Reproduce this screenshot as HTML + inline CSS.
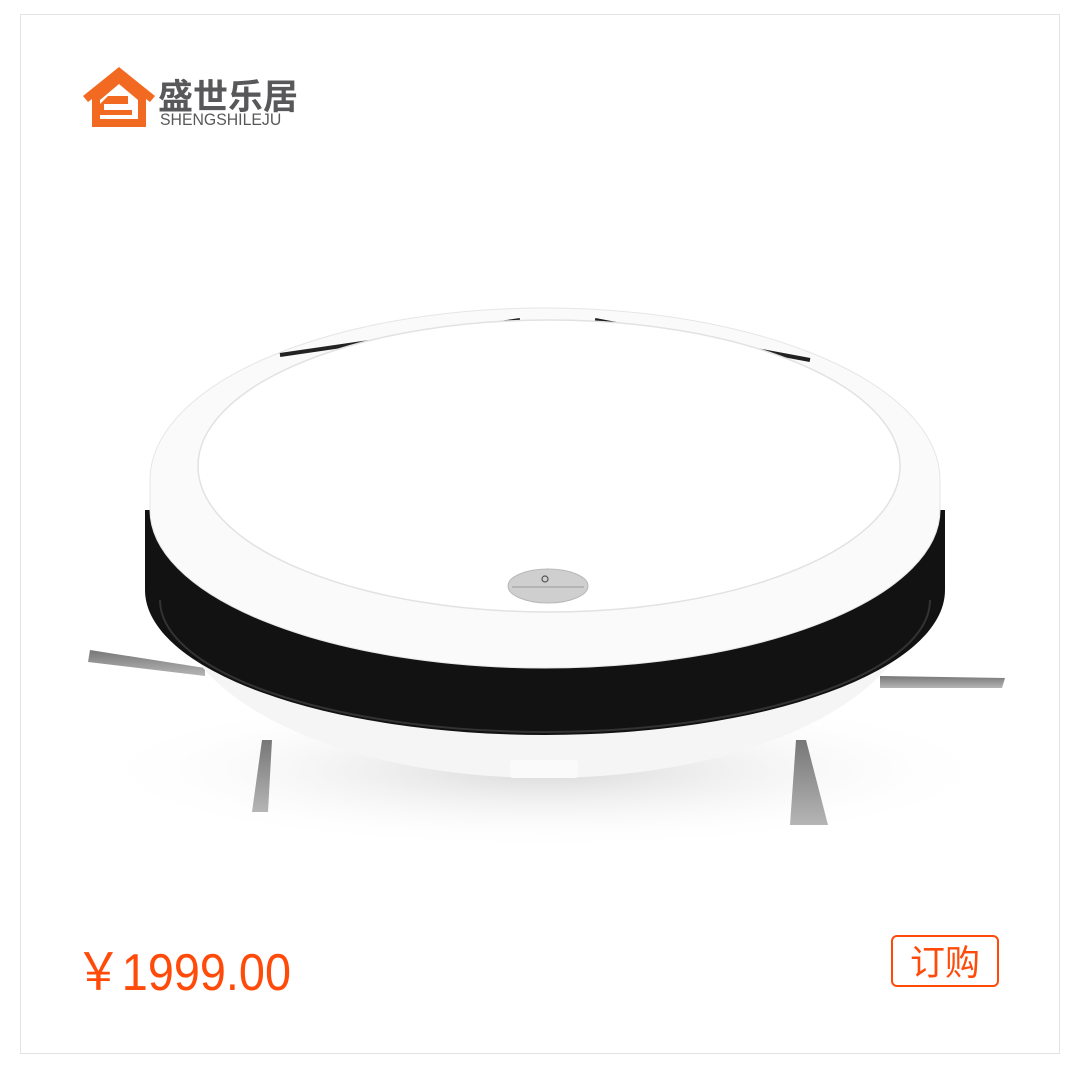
<!DOCTYPE html>
<html><head><meta charset="utf-8"><style>
html,body{margin:0;padding:0;background:#fff;width:1080px;height:1068px;overflow:hidden}
.card{position:absolute;left:20px;top:14px;width:1038px;height:1038px;border:1px solid #e3e3e3;box-sizing:content-box}
.t1{position:absolute;left:158px;top:74px;font:bold 35px "Noto Sans CJK SC",sans-serif;color:#58585a;letter-spacing:0px;line-height:42px}
.t2{position:absolute;left:160px;top:110px;font:17px "Liberation Sans",sans-serif;color:#58585a;letter-spacing:0px;transform:scaleX(0.93);transform-origin:left}
.price{position:absolute;left:75px;top:930px;font:52px "Liberation Sans Narrow","Liberation Sans",sans-serif;color:#ff4a0a;transform:scaleX(0.9);transform-origin:left}
.btn{position:absolute;left:891px;top:935px;width:104px;height:48px;border:2px solid #ff4a0a;border-radius:6px;color:#ff4a0a;font:35px "Noto Sans CJK SC",sans-serif;text-align:center;line-height:48px}
</style></head><body>
<div class="card"></div>
<svg style="position:absolute;left:0;top:0" width="1080" height="1068">
<defs>
<radialGradient id="sh" cx="50%" cy="50%" r="50%"><stop offset="0" stop-color="#d8d8d8"/><stop offset="1" stop-color="#fff" stop-opacity="0"/></radialGradient>
<linearGradient id="br" x1="0" x2="0" y1="0" y2="1"><stop offset="0" stop-color="#777"/><stop offset="1" stop-color="#b5b5b5"/></linearGradient>
</defs>
<path d="M83 96 L119 67 L155 96 L150 102 L146 99 L146 127 L92 127 L92 99 L88 102 Z" fill="#f26a22"/>
<path d="M100 100 L119 84 L138 100 L138 119 L100 119 Z" fill="#fff"/>
<path d="M108 96 L128 96 L128 104 L104 104 L104 110 L132 110 L132 115 L100 115 L100 104 Z" fill="#f26a22"/>
<ellipse cx="545" cy="770" rx="460" ry="80" fill="url(#sh)"/>
<polygon points="90,650 205,668 205,676 88,662" fill="url(#br)"/>
<polygon points="880,676 1005,678 1002,688 880,688" fill="url(#br)"/>
<polygon points="262,740 272,740 268,812 252,812" fill="url(#br)"/>
<polygon points="796,740 806,740 828,825 790,825" fill="url(#br)"/>
<path d="M175 600 A370 178 0 0 0 915 600 Z" fill="#f5f5f5"/>
<rect x="510" y="760" width="68" height="18" rx="3" fill="#fafafa"/>
<path d="M145 510 L945 510 L945 590 A400 145 0 0 1 145 590 Z" fill="#121212"/>
<path d="M160 600 A385 132 0 0 0 930 600" fill="none" stroke="#333" stroke-width="2"/>
<path d="M150 480 A395 172 0 0 1 940 480 L940 510 A395 158 0 0 1 150 510 Z" fill="#fafafa" stroke="#e6e6e6" stroke-width="1"/>
<path d="M280 355 L520 320 M595 320 L810 360" stroke="#222" stroke-width="4"/>
<ellipse cx="549" cy="466" rx="351" ry="146" fill="#fff" stroke="#e2e2e2" stroke-width="1.5"/>
<ellipse cx="548" cy="586" rx="40" ry="17" fill="#cfcfcf" stroke="#b8b8b8"/>
<line x1="512" y1="587" x2="584" y2="587" stroke="#999" stroke-width="1"/>
<circle cx="545" cy="579" r="3" fill="none" stroke="#555" stroke-width="1.2"/>
</svg>
<div class="t1">盛世乐居</div>
<div class="t2">SHENGSHILEJU</div>
<div class="price">￥1999.00</div>
<div class="btn">订购</div>
</body></html>
